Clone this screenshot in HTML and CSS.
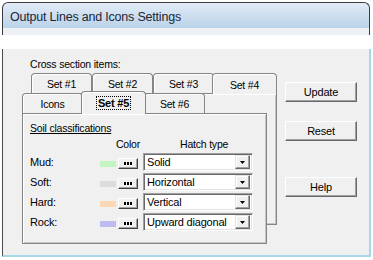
FILE: index.html
```html
<!DOCTYPE html>
<html>
<head>
<meta charset="utf-8">
	<title>Output Lines and Icons Settings</title>
	<link rel="stylesheet" href="styles.css">
</head>
<body>
	<div class="window">
		<div class="titlebar"><span class="title">Output Lines and Icons Settings</span></div>
		<div class="band"></div>
	</div>
	<div class="whiteband"></div>
	<div class="client">
		<div class="left">
			<div class="caption">Cross section items:</div>
			<div class="stack">
				<div class="tabctl back">
					<div class="tabs">
						<div class="tab">Set #1</div>
						<div class="tab">Set #2</div>
						<div class="tab">Set #3</div>
						<div class="tab sel">Set #4</div>
					</div>
					<div class="panel"></div>
				</div>
				<div class="tabctl front">
					<div class="tabs">
						<div class="tab">Icons</div>
						<div class="tab sel raised"><span class="focus">Set #5</span></div>
						<div class="tab">Set #6</div>
					</div>
					<div class="panel">
						<div class="group">Soil classifications</div>
						<div class="rows">
							<div></div>
							<div class="colhead">Color</div>
							<div class="hatchhead">Hatch type</div>

							<div class="lbl">Mud:</div>
							<div class="swatch mud"></div>
							<div class="dots"><svg width="8" height="3"><rect x="0" y="0" width="2" height="3"/><rect x="3" y="0" width="2" height="3"/><rect x="6" y="0" width="2" height="3"/></svg></div>
							<div class="combo"><span class="val">Solid</span><span class="drop"><svg width="5" height="3"><polygon points="0,0 5,0 2.5,3"/></svg></span></div>

							<div class="lbl">Soft:</div>
							<div class="swatch soft"></div>
							<div class="dots"><svg width="8" height="3"><rect x="0" y="0" width="2" height="3"/><rect x="3" y="0" width="2" height="3"/><rect x="6" y="0" width="2" height="3"/></svg></div>
							<div class="combo"><span class="val">Horizontal</span><span class="drop"><svg width="5" height="3"><polygon points="0,0 5,0 2.5,3"/></svg></span></div>

							<div class="lbl">Hard:</div>
							<div class="swatch hard"></div>
							<div class="dots"><svg width="8" height="3"><rect x="0" y="0" width="2" height="3"/><rect x="3" y="0" width="2" height="3"/><rect x="6" y="0" width="2" height="3"/></svg></div>
							<div class="combo"><span class="val">Vertical</span><span class="drop"><svg width="5" height="3"><polygon points="0,0 5,0 2.5,3"/></svg></span></div>

							<div class="lbl">Rock:</div>
							<div class="swatch rock"></div>
							<div class="dots"><svg width="8" height="3"><rect x="0" y="0" width="2" height="3"/><rect x="3" y="0" width="2" height="3"/><rect x="6" y="0" width="2" height="3"/></svg></div>
							<div class="combo"><span class="val">Upward diagonal</span><span class="drop"><svg width="5" height="3"><polygon points="0,0 5,0 2.5,3"/></svg></span></div>
						</div>
					</div>
				</div>
			</div>
		</div>
		<div class="right">
			<div class="btn update">Update</div>
			<div class="btn reset">Reset</div>
			<div class="btn help">Help</div>
		</div>
	</div>
</body>
</html>
```

FILE: styles.css
```css
body{
	margin: 0px;
	padding: 0px;
	background-color: #ffffff;
	font-family: "Liberation Sans", Arial, sans-serif;
	font-size: 10.5px;
	letter-spacing: -0.2px;
	color: #000000;
	width: 373px;
	height: 260px;
	overflow: hidden;
}
svg{
	display: block;
}
.window{
	margin: 2px 0px 0px 2px;
	width: 368px;
}
.titlebar{
	height: 26px;
	box-sizing: border-box;
	background: linear-gradient(#e2ebf6, #bad2ea);
	border: 1px solid #3c3c3c;
	border-bottom: none;
	border-radius: 6px 6px 0px 0px;
	padding: 2px 0px 0px 7px;
	display: flex;
	align-items: center;
}
.title{
	font-size: 12.5px;
	letter-spacing: -0.2px;
	color: #1b2736;
}
.band{
	height: 7px;
	background-color: #edf0f4;
	border-left: 1px solid #3c3c3c;
	border-right: 1px solid #3c3c3c;
}
.whiteband{
	height: 14px;
}
.client{
	margin-left: 2px;
	width: 369px;
	height: 208px;
	box-sizing: border-box;
	background-color: #f0f0f0;
	border-left: 1px solid #4a4a4a;
	border-right: 2px solid #a6d8ea;
	border-bottom: 2px solid #a6d8ea;
	padding: 9px 0px 0px 19px;
	display: flex;
}
.left{
	width: 255px;
}
.caption{
	margin-left: 8px;
	line-height: 13px;
}
.stack{
	display: grid;
	margin-top: 2px;
}
.tabctl{
	grid-area: 1 / 1;
	display: flex;
	flex-direction: column;
}
.back{
	margin-left: 9px;
	width: 246px;
}
.front{
	margin-top: 20px;
	width: 245px;
}
.tabs{
	display: flex;
	align-items: flex-end;
	height: 20px;
}
.tab{
	width: 61px;
	height: 20px;
	box-sizing: border-box;
	border: 1px solid #858585;
	border-bottom: none;
	border-radius: 4px 4px 0px 0px;
	box-shadow: inset 1px 1px 0px #ffffff;
	background-color: #f0f0f0;
	display: flex;
	align-items: center;
	justify-content: center;
	padding-top: 1px;
}
.tab.sel{
	width: 65px;
	height: 21px;
	margin: 0px -2px -1px -2px;
	position: relative;
	z-index: 1;
}
.tab.raised{
	height: 23px;
	padding-top: 0px;
}
.focus{
	font-weight: bold;
	font-size: 11px;
	outline: 1px dotted #000000;
	padding: 0px 1px;
	line-height: 12px;
}
.panel{
	flex: none;
	box-sizing: border-box;
	border: 1px solid #858585;
	box-shadow: inset 1px 1px 0px #ffffff, inset -1px -1px 0px #c4c4c4;
	background-color: #f0f0f0;
}
.back .panel{
	height: 132px;
}
.front .panel{
	height: 131px;
}
.group{
	margin: 8px 0px 0px 7px;
	line-height: 13px;
	text-decoration: underline;
}
.rows{
	margin: 3px 0px 0px 7px;
	display: grid;
	grid-template-columns: 70px 18px 25px 110px;
	grid-auto-rows: 18px;
	row-gap: 2px;
	grid-template-rows: 13px;
}
.colhead{
	grid-column: 2 / 4;
	text-align: right;
	padding-right: 3px;
	line-height: 13px;
}
.hatchhead{
	padding-left: 37px;
	line-height: 13px;
}
.lbl{
	display: flex;
	align-items: center;
	font-size: 11px;
}
.swatch{
	width: 16px;
	height: 6px;
	align-self: center;
	margin-top: 3px;
}
.mud{ background-color: #c2f5c2; }
.soft{ background-color: #dcdcdc; }
.hard{ background-color: #fcd9b4; }
.rock{ background-color: #bcbcf4; }
.dots{
	width: 20px;
	height: 11px;
	box-sizing: border-box;
	align-self: center;
	margin-top: 2px;
	border: 1px solid;
	border-color: #ffffff #404040 #404040 #ffffff;
	box-shadow: inset -1px -1px 0px #a0a0a0;
	background-color: #f0f0f0;
	display: flex;
	align-items: center;
	justify-content: center;
}
.combo{
	height: 18px;
	box-sizing: border-box;
	border: 1px solid;
	border-color: #a0a0a0 #ffffff #ffffff #a0a0a0;
	box-shadow: inset 1px 1px 0px #696969, inset -1px -1px 0px #e3e3e3;
	background-color: #ffffff;
	display: flex;
	align-items: center;
	padding: 2px 2px 2px 3px;
	font-size: 11px;
}
.val{
	flex: 1;
}
.drop{
	width: 15px;
	height: 14px;
	box-sizing: border-box;
	border: 1px solid;
	border-color: #e3e3e3 #696969 #696969 #e3e3e3;
	box-shadow: inset -1px -1px 0px #a0a0a0, inset 1px 1px 0px #ffffff;
	background-color: #f0f0f0;
	display: flex;
	align-items: center;
	justify-content: center;
}
.right{
	display: flex;
	flex-direction: column;
	padding-left: 8px;
}
.btn{
	width: 72px;
	height: 20px;
	box-sizing: border-box;
	border: 1px solid;
	border-color: #ffffff #696969 #696969 #ffffff;
	box-shadow: inset -1px -1px 0px #a0a0a0;
	background-color: #f0f0f0;
	font-size: 11px;
	display: flex;
	align-items: center;
	justify-content: center;
}
.update{ margin-top: 24px; }
.reset{ margin-top: 19px; }
.help{ margin-top: 36px; }
```
